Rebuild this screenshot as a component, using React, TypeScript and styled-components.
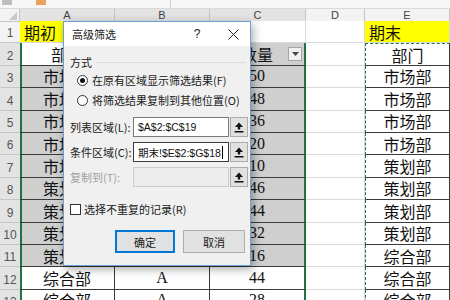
import React from 'react';
import styled, { createGlobalStyle, css } from 'styled-components';

type Fill = 'none' | 'gray' | 'yellow';
type Edge = 'grid' | 'table';

interface ICellData {
  text?: string;
  fill?: Fill;
  edge?: Edge;
  align?: 'left' | 'center';
  serif?: boolean;
  selLeft?: boolean;
  selRight?: boolean;
  marquee?: boolean;
  marqueeTop?: boolean;
  filter?: boolean;
}

const COLUMNS = '20px 95px 95px 96px 59px 85px';

const fills: Record<Fill, string> = {
  none: '#ffffff',
  gray: '#cfcfcf',
  yellow: '#ffff00',
};

// column B is under the dialog until row 12
const aValues = ['期初', '部门', '市场部', '市场部', '市场部', '市场部', '市场部', '策划部', '策划部', '策划部', '策划部', '综合部', '综合部'];
const bValues = ['', '', '', '', '', '', '', '', '', '', '', 'A', 'A'];
const cValues = ['', '数量', '50', '48', '36', '20', '10', '46', '44', '32', '16', '44', '28'];
const eValues = ['期末', '部门', '市场部', '市场部', '市场部', '市场部', '策划部', '策划部', '策划部', '策划部', '综合部', '综合部', '综合部'];

const buildRow = (i: number): ICellData[] => {
  if (i === 0) {
    return [
      { text: aValues[0], fill: 'yellow', align: 'left' },
      {},
      {},
      {},
      { text: eValues[0], fill: 'yellow', align: 'left' },
    ];
  }
  const shaded: Fill = i >= 2 && i <= 10 ? 'gray' : 'none';
  return [
    { text: aValues[i], fill: shaded, edge: 'table', selLeft: true },
    { text: bValues[i], fill: shaded, edge: 'table', serif: true },
    {
      text: cValues[i],
      fill: i === 1 ? 'gray' : shaded,
      edge: 'table',
      serif: i > 1,
      selRight: true,
      filter: i === 1,
    },
    {},
    { text: eValues[i], edge: 'table', marquee: true, marqueeTop: i === 1 },
  ];
};

const rows = aValues.map((_, i) => buildRow(i));

export default function App() {
  return (
    <>
      <GlobalStyle />
      <Sheet>
        <TopStrip>
          <StripIcon $color="#bdbdbd" />
          <StripIcon $color="#e8a25a" />
          <StripDivider />
        </TopStrip>
        <HeaderRow>
          <Corner>
            <CornerMark />
          </Corner>
          {['A', 'B', 'C', 'D', 'E'].map((letter, idx) => (
            <ColHeader key={letter} $active={idx < 3}>
              {letter}
            </ColHeader>
          ))}
        </HeaderRow>
        {rows.map((cells, i) => (
          <Row key={i}>
            <RowHeader $active={i > 0}>{i + 1}</RowHeader>
            {cells.map((cell, j) => (
              <Cell
                key={j}
                $fill={cell.fill ?? 'none'}
                $edge={cell.edge ?? 'grid'}
                $align={cell.align ?? 'center'}
                $serif={!!cell.serif}
                $selLeft={!!cell.selLeft}
                $selRight={!!cell.selRight}
                $marquee={!!cell.marquee}
                $marqueeTop={!!cell.marqueeTop}
              >
                {cell.text}
                {cell.filter ? (
                  <FilterButton>
                    <svg width="7" height="4" viewBox="0 0 7 4">
                      <path d="M0 0 L7 0 L3.5 4 Z" fill="#444" />
                    </svg>
                  </FilterButton>
                ) : null}
              </Cell>
            ))}
          </Row>
        ))}

        <Dialog>
          <TitleBar>
            <TitleText>高级筛选</TitleText>
            <HelpButton>?</HelpButton>
            <CloseButton>
              <svg width="11" height="11" viewBox="0 0 11 11">
                <path d="M0.5 0.5 L10.5 10.5 M10.5 0.5 L0.5 10.5" stroke="#222" strokeWidth="1" />
              </svg>
            </CloseButton>
          </TitleBar>
          <Body>
            <GroupHeader>
              <span>方式</span>
              <GroupLine />
            </GroupHeader>
            <RadioRow>
              <Radio $checked />
              <span>在原有区域显示筛选结果(F)</span>
            </RadioRow>
            <RadioRow>
              <Radio $checked={false} />
              <span>将筛选结果复制到其他位置(O)</span>
            </RadioRow>
            <Fields>
              <FieldRow>
                <FieldLabel $disabled={false}>列表区域(L):</FieldLabel>
                <Input $disabled={false} $focused={false}>$A$2:$C$19</Input>
                <RefButton>
                  <RefIcon />
                </RefButton>
              </FieldRow>
              <FieldRow>
                <FieldLabel $disabled={false}>条件区域(C):</FieldLabel>
                <Input $disabled={false} $focused>
                  期末!$E$2:$G$18
                  <Caret />
                </Input>
                <RefButton>
                  <RefIcon />
                </RefButton>
              </FieldRow>
              <FieldRow>
                <FieldLabel $disabled>复制到(T):</FieldLabel>
                <Input $disabled $focused={false} />
                <RefButton>
                  <RefIcon />
                </RefButton>
              </FieldRow>
            </Fields>
            <CheckRow>
              <CheckBox />
              <span>选择不重复的记录(R)</span>
            </CheckRow>
            <ButtonRow>
              <DialogButton $primary>确定</DialogButton>
              <DialogButton $primary={false}>取消</DialogButton>
            </ButtonRow>
          </Body>
        </Dialog>
      </Sheet>
    </>
  );
}

const RefIcon = () => (
  <svg width="10" height="11" viewBox="0 0 10 11">
    <path d="M5 0.5 L9 5 L6.2 5 L6.2 7.5 L3.8 7.5 L3.8 5 L1 5 Z" fill="#111" />
    <rect x="0.5" y="9" width="9" height="1.5" fill="#111" />
  </svg>
);

const GlobalStyle = createGlobalStyle`
  html, body {
    margin: 0;
    padding: 0;
  }
  body {
    width: 450px;
    height: 300px;
    overflow: hidden;
    background: #ffffff;
    font-family: "Noto Sans CJK SC", "Liberation Sans", sans-serif;
  }
`;

const Sheet = styled.div`
  position: relative;
  width: 450px;
  height: 300px;
  overflow: hidden;
  background: #ffffff;
`;

const TopStrip = styled.div`
  height: 9px;
  display: flex;
  align-items: flex-start;
  gap: 24px;
  padding-left: 2px;
  background: #f7f7f7;
  border-bottom: 1px solid #dadada;
  box-sizing: border-box;
`;

const StripIcon = styled.div<{ $color: string }>`
  width: 10px;
  height: 5px;
  background: ${({ $color }) => $color};
`;

const StripDivider = styled.div`
  width: 1px;
  height: 8px;
  margin-left: 100px;
  background: #d0d0d0;
`;

const HeaderRow = styled.div`
  display: grid;
  grid-template-columns: ${COLUMNS};
  height: 12px;
`;

const Corner = styled.div`
  position: relative;
  background: #f3f3f3;
  border-right: 1px solid #c6c6c6;
  border-bottom: 1px solid #c6c6c6;
  box-sizing: border-box;
`;

const CornerMark = styled.div`
  position: absolute;
  right: 2px;
  bottom: 1px;
  width: 0;
  height: 0;
  border-left: 8px solid transparent;
  border-bottom: 8px solid #c9c9c9;
`;

const ColHeader = styled.div<{ $active: boolean }>`
  display: flex;
  align-items: center;
  justify-content: center;
  box-sizing: border-box;
  background: ${({ $active }) => ($active ? '#e3e3e3' : '#f3f3f3')};
  border-right: 1px solid #c6c6c6;
  border-bottom: 1px solid ${({ $active }) => ($active ? '#9fb7a8' : '#c6c6c6')};
  font-family: "Liberation Sans", sans-serif;
  font-size: 11px;
  color: #444;
`;

const Row = styled.div`
  display: grid;
  grid-template-columns: ${COLUMNS};
  height: 22.4px;
`;

const RowHeader = styled.div<{ $active: boolean }>`
  display: flex;
  align-items: flex-end;
  justify-content: center;
  padding-bottom: 2px;
  box-sizing: border-box;
  background: ${({ $active }) => ($active ? '#e3e3e3' : '#f3f3f3')};
  border-bottom: 1px solid #c6c6c6;
  font-family: "Liberation Sans", sans-serif;
  font-size: 12px;
  color: #555;
`;

const Cell = styled.div<{
  $fill: Fill;
  $edge: Edge;
  $align: 'left' | 'center';
  $serif: boolean;
  $selLeft: boolean;
  $selRight: boolean;
  $marquee: boolean;
  $marqueeTop: boolean;
}>`
  position: relative;
  display: flex;
  align-items: center;
  justify-content: ${({ $align }) => ($align === 'left' ? 'flex-start' : 'center')};
  padding-left: ${({ $align }) => ($align === 'left' ? '4px' : '0')};
  box-sizing: border-box;
  overflow: hidden;
  white-space: nowrap;
  background: ${({ $fill }) => fills[$fill]};
  border-right: 1px solid ${({ $edge }) => ($edge === 'table' ? '#3a3a3a' : '#d9d9d9')};
  border-bottom: 1px solid ${({ $edge }) => ($edge === 'table' ? '#3a3a3a' : '#d9d9d9')};
  font-family: ${({ $serif }) =>
    $serif
      ? '"Liberation Serif", "Noto Sans CJK SC", serif'
      : '"Noto Sans CJK SC", "Liberation Sans", sans-serif'};
  font-size: 16px;
  color: #111;

  ${({ $selLeft }) =>
    $selLeft &&
    css`
      box-shadow: inset 2px 0 0 #217346;
    `}
  ${({ $selRight }) =>
    $selRight &&
    css`
      border-right: 2px solid #217346;
    `}
  ${({ $marquee }) =>
    $marquee &&
    css`
      border-left: 1px dashed #217346;
    `}
  ${({ $marqueeTop }) =>
    $marqueeTop &&
    css`
      border-top: 1px dashed #217346;
    `}
`;

const FilterButton = styled.div`
  position: absolute;
  right: 2px;
  top: 4px;
  width: 14px;
  height: 14px;
  display: flex;
  align-items: center;
  justify-content: center;
  box-sizing: border-box;
  background: #f0f0f0;
  border: 1px solid #a6a6a6;
`;

const Dialog = styled.div`
  position: absolute;
  left: 63px;
  top: 21px;
  width: 188px;
  height: 245px;
  box-sizing: border-box;
  display: flex;
  flex-direction: column;
  background: #f0f0f0;
  border: 1px solid #6aa0d4;
  box-shadow: 2px 3px 9px rgba(0, 0, 0, 0.35);
  font-family: "Noto Sans CJK SC", "Liberation Sans", sans-serif;
  font-size: 11px;
  color: #1a1a1a;
`;

const TitleBar = styled.div`
  height: 24px;
  display: flex;
  align-items: center;
  padding-left: 8px;
  background: #ffffff;
`;

const TitleText = styled.div`
  flex: 1;
`;

const HelpButton = styled.div`
  width: 30px;
  margin-right: 4px;
  text-align: center;
  font-family: "Liberation Sans", sans-serif;
  font-size: 12px;
`;

const CloseButton = styled.div`
  width: 34px;
  height: 24px;
  display: flex;
  align-items: center;
  justify-content: center;
`;

const Body = styled.div`
  flex: 1;
  display: flex;
  flex-direction: column;
  padding: 8px 4px 0 6px;
`;

const GroupHeader = styled.div`
  height: 16px;
  display: flex;
  align-items: center;
  gap: 4px;
`;

const GroupLine = styled.div`
  flex: 1;
  height: 1px;
  background: #dcdcdc;
`;

const RadioRow = styled.div`
  height: 20px;
  display: flex;
  align-items: center;
  gap: 4px;
  margin-left: 7px;
  &:first-of-type {
    margin-top: 5px;
  }
`;

const Radio = styled.div<{ $checked: boolean }>`
  width: 11px;
  height: 11px;
  box-sizing: border-box;
  border-radius: 50%;
  border: 1px solid #333;
  background: #fff;
  display: flex;
  align-items: center;
  justify-content: center;
  &::after {
    content: '';
    width: 5px;
    height: 5px;
    border-radius: 50%;
    background: ${({ $checked }) => ($checked ? '#111' : 'transparent')};
  }
`;

const Fields = styled.div`
  display: flex;
  flex-direction: column;
  gap: 5px;
  margin-top: 7px;
`;

const FieldRow = styled.div`
  display: grid;
  grid-template-columns: 62px 96px 18px;
  column-gap: 1px;
  height: 20px;
  align-items: stretch;
`;

const FieldLabel = styled.div<{ $disabled: boolean }>`
  display: flex;
  align-items: center;
  white-space: nowrap;
  color: ${({ $disabled }) => ($disabled ? '#a0a0a0' : '#1a1a1a')};
`;

const Input = styled.div<{ $disabled: boolean; $focused: boolean }>`
  display: flex;
  align-items: center;
  padding-left: 4px;
  box-sizing: border-box;
  overflow: hidden;
  white-space: nowrap;
  background: ${({ $disabled }) => ($disabled ? '#ececec' : '#ffffff')};
  border: 1px solid
    ${({ $disabled, $focused }) => ($disabled ? '#cccccc' : $focused ? '#3c3c3c' : '#7a7a7a')};
  font-family: "Liberation Sans", "Noto Sans CJK SC", sans-serif;
  font-size: 10.5px;
  color: #111;
`;

const Caret = styled.span`
  display: inline-block;
  width: 1px;
  height: 13px;
  margin-left: 1px;
  background: #000;
`;

const RefButton = styled.div`
  display: flex;
  align-items: center;
  justify-content: center;
  box-sizing: border-box;
  background: #e1e1e1;
  border: 1px solid #adadad;
`;

const CheckRow = styled.div`
  height: 16px;
  margin-top: 14px;
  display: flex;
  align-items: center;
  gap: 3px;
`;

const CheckBox = styled.div`
  width: 11px;
  height: 11px;
  box-sizing: border-box;
  border: 1px solid #333;
  background: #fff;
`;

const ButtonRow = styled.div`
  display: flex;
  justify-content: flex-end;
  gap: 8px;
  margin-top: 13px;
  padding-right: 1px;
`;

const DialogButton = styled.div<{ $primary: boolean }>`
  width: ${({ $primary }) => ($primary ? '60px' : '62px')};
  height: 23px;
  display: flex;
  align-items: center;
  justify-content: center;
  box-sizing: border-box;
  background: #e1e1e1;
  border: 1px solid ${({ $primary }) => ($primary ? '#0078d7' : '#adadad')};
  box-shadow: ${({ $primary }) => ($primary ? 'inset 0 0 0 1px #0078d7' : 'none')};
`;
